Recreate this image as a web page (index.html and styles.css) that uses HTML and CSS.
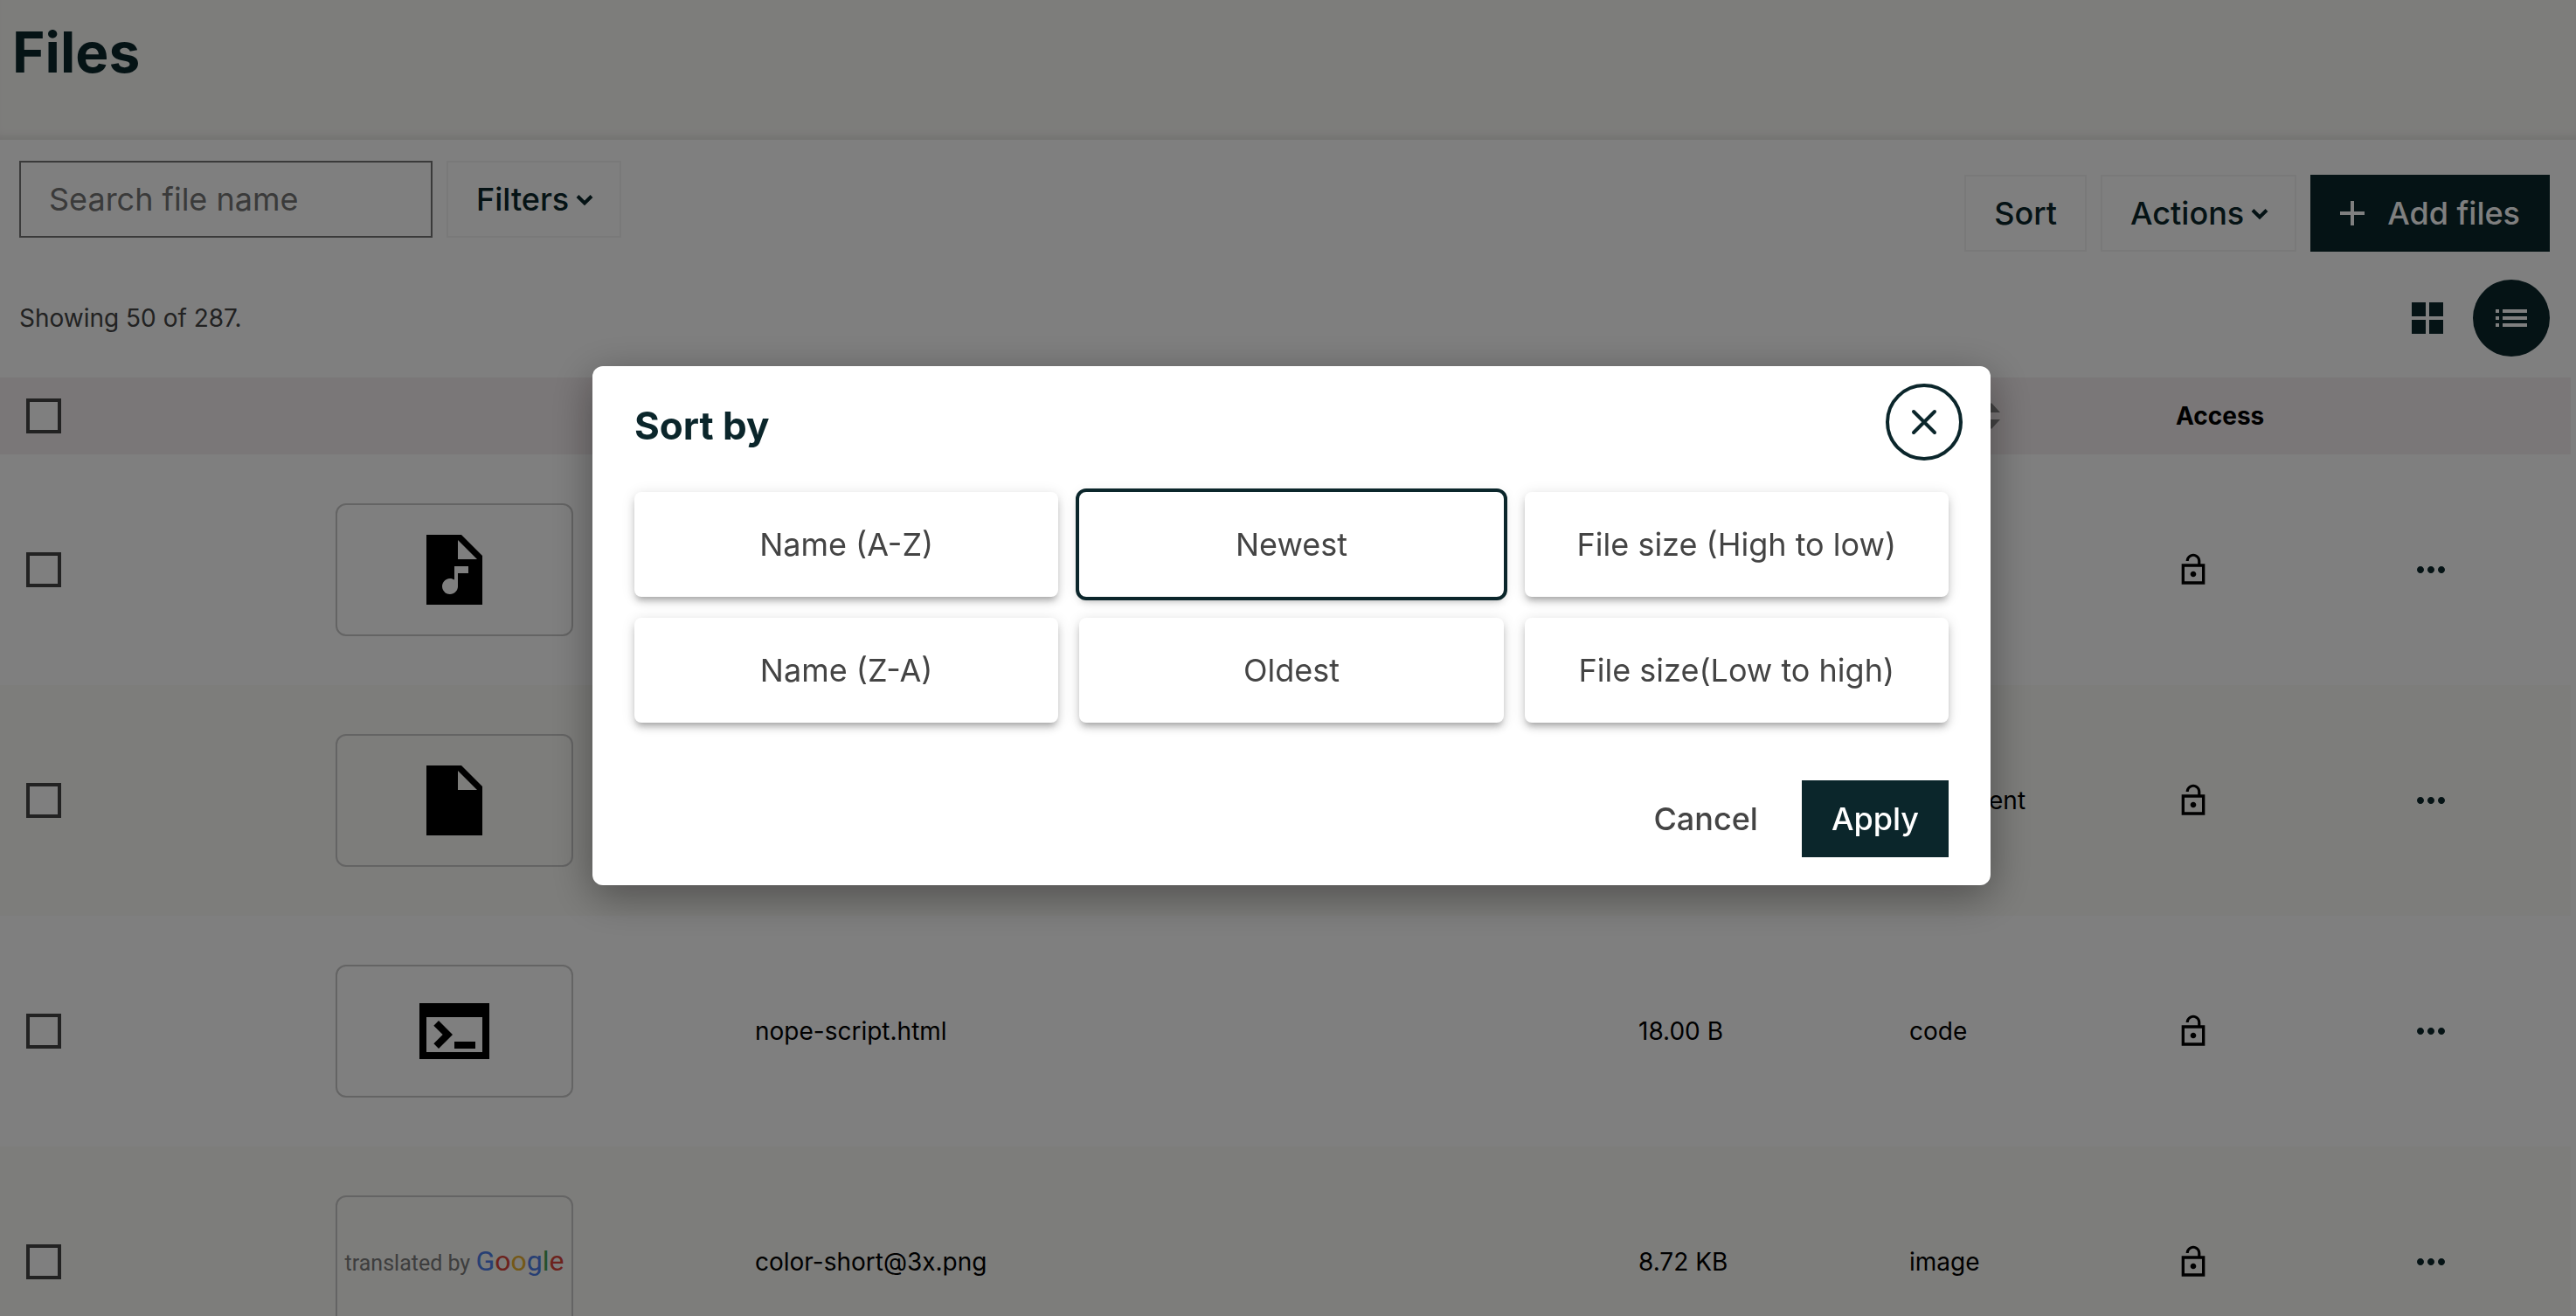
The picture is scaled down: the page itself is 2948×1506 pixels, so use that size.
FILE: index.html
```html
<!DOCTYPE html>
<html lang="en">
<head>
<meta charset="utf-8">
<title>Files</title>
<meta name="viewport" content="width=device-width, initial-scale=1">
<link rel="stylesheet" href="styles.css">
</head>
<body>
<svg class="sprite" aria-hidden="true">
  <symbol id="i-lock" viewBox="0 0 24 24"><path d="M12 17c1.1 0 2-.9 2-2s-.9-2-2-2-2 .9-2 2 .9 2 2 2zm8-9h-3V6c0-2.76-2.24-5-5-5S7 3.24 7 6h1.9c0-1.71 1.39-3.1 3.1-3.1 1.71 0 3.1 1.39 3.1 3.1v2H4v14h16V8zm-2 12H6V10h12v10z"/></symbol>
  <symbol id="i-more" viewBox="0 0 24 24"><path d="M6 10c-1.1 0-2 .9-2 2s.9 2 2 2 2-.9 2-2-.9-2-2-2zm12 0c-1.1 0-2 .9-2 2s.9 2 2 2 2-.9 2-2-.9-2-2-2zm-6 0c-1.1 0-2 .9-2 2s.9 2 2 2 2-.9 2-2-.9-2-2-2z"/></symbol>
  <symbol id="i-chevron" viewBox="0 0 20 20"><path d="M2 6.500l8 8 8-8" fill="none" stroke="currentColor" stroke-width="4"/></symbol>
  <symbol id="i-sort" viewBox="0 0 20 32"><path d="M0 12L10 1l10 11zM0 20l10 11 10-11z"/></symbol>
</svg>

<div class="page">
  <header class="page-header">
    <h1>Files</h1>
  </header>

  <main>
    <div class="toolbar">
      <div class="toolbar-search">
        <input class="search" type="text" placeholder="Search file name" aria-label="Search file name">
        <button class="btn btn-outline" type="button">Filters<svg class="chevron"><use href="#i-chevron"/></svg></button>
      </div>
      <div class="toolbar-actions">
        <button class="btn btn-outline" type="button">Sort</button>
        <button class="btn btn-outline" type="button">Actions<svg class="chevron"><use href="#i-chevron"/></svg></button>
        <button class="btn btn-dark btn-add" type="button"><svg class="plus" viewBox="0 0 24 24"><path d="M19 13h-6v6h-2v-6H5v-2h6V5h2v6h6v2z"/></svg>Add files</button>
      </div>
    </div>

    <div class="summary">
      <p>Showing 50 of 287.</p>
      <div class="views">
        <button class="round" type="button" aria-label="Grid view"><svg viewBox="0 0 24 24"><path d="M3 3v8h8V3H3zm0 10v8h8v-8H3zM13 3v8h8V3h-8zm0 10v8h8v-8h-8z"/></svg></button>
        <button class="round round-active" type="button" aria-label="List view"><svg viewBox="0 0 24 24"><path d="M3 13h2v-2H3v2zm0 4h2v-2H3v2zm0-8h2V7H3v2zm4 4h14v-2H7v2zm0 4h14v-2H7v2zM7 7v2h14V7H7z"/></svg></button>
      </div>
    </div>

    <table class="files">
      <colgroup><col class="c-check"><col class="c-thumb"><col class="c-name"><col class="c-size"><col class="c-type"><col class="c-access"><col class="c-menu"></colgroup>
      <thead>
        <tr>
          <th><input type="checkbox" aria-label="Select all files"></th>
          <th></th>
          <th></th>
          <th></th>
          <th><span class="sortable">Type<svg class="sort-arrows"><use href="#i-sort"/></svg></span></th>
          <th>Access</th>
          <th></th>
        </tr>
      </thead>
      <tbody>
        <tr>
          <td><input type="checkbox" aria-label="Select audio file"></td>
          <td><div class="thumb"><svg viewBox="0 0 24 24"><path d="M14 2H4v20h16V8l-6-6zm2 11h-3v3.750c0 1.240-1.010 2.250-2.250 2.250S8.500 17.990 8.500 16.750s1.010-2.250 2.250-2.250c.46 0 .89.14 1.250.38V11h4v2zm-3-4V3.500L18.500 9H13z"/></svg></div></td>
          <td></td><td></td><td>audio</td>
          <td><svg class="lock"><use href="#i-lock"/></svg></td>
          <td><button class="menu" type="button" aria-label="More"><svg><use href="#i-more"/></svg></button></td>
        </tr>
        <tr>
          <td><input type="checkbox" aria-label="Select document"></td>
          <td><div class="thumb"><svg viewBox="0 0 24 24"><path d="M4 2v20h16V8l-6-6H4zm9 7V3.500L18.500 9H13z"/></svg></div></td>
          <td></td><td></td><td>document</td>
          <td><svg class="lock"><use href="#i-lock"/></svg></td>
          <td><button class="menu" type="button" aria-label="More"><svg><use href="#i-more"/></svg></button></td>
        </tr>
        <tr>
          <td><input type="checkbox" aria-label="Select nope-script.html"></td>
          <td><div class="thumb"><svg viewBox="0 0 24 24"><path d="M2 4v16h20V4H2zm18 14H4V8h16v10zm-2-1h-6v-2h6v2zM7.500 17l-1.410-1.410L8.670 13l-2.590-2.590L7.500 9l4 4-4 4z"/></svg></div></td>
          <td>nope-script.html</td><td>18.00 B</td><td>code</td>
          <td><svg class="lock"><use href="#i-lock"/></svg></td>
          <td><button class="menu" type="button" aria-label="More"><svg><use href="#i-more"/></svg></button></td>
        </tr>
        <tr>
          <td><input type="checkbox" aria-label="Select color-short@3x.png"></td>
          <td><div class="thumb"><span class="attribution">translated by <span class="google"><span class="g-blue">G</span><span class="g-red">o</span><span class="g-yellow">o</span><span class="g-blue">g</span><span class="g-green">l</span><span class="g-red">e</span></span></span></div></td>
          <td>color-short@3x.png</td><td>8.72 KB</td><td>image</td>
          <td><svg class="lock"><use href="#i-lock"/></svg></td>
          <td><button class="menu" type="button" aria-label="More"><svg><use href="#i-more"/></svg></button></td>
        </tr>
      </tbody>
    </table>
  </main>
</div>

<div class="overlay">
  <section class="dialog" role="dialog" aria-modal="true" aria-labelledby="dialog-title">
    <div class="dialog-head">
      <h2 id="dialog-title">Sort by</h2>
      <button class="round round-outline" type="button" aria-label="Close"><svg viewBox="0 0 24 24"><path d="M6 6l12 12M18 6L6 18" fill="none" stroke="currentColor" stroke-width="2" stroke-linecap="round"/></svg></button>
    </div>
    <div class="options">
      <button class="option" type="button">Name (A-Z)</button>
      <button class="option option-selected" type="button" aria-pressed="true">Newest</button>
      <button class="option" type="button">File size (High to low)</button>
      <button class="option" type="button">Name (Z-A)</button>
      <button class="option" type="button">Oldest</button>
      <button class="option" type="button">File size(Low to high)</button>
    </div>
    <div class="dialog-actions">
      <button class="btn btn-text" type="button">Cancel</button>
      <button class="btn btn-dark" type="button">Apply</button>
    </div>
  </section>
</div>
</body>
</html>
```
FILE: styles.css
```css
:root {
  --ink: #0b262b;
  --grey: #444;
}

* { box-sizing: border-box; }

html, body { height: 100%; }

body {
  margin: 0;
  overflow: hidden;
  background: #fff;
  color: #000;
  font-family: Inter, "Liberation Sans", sans-serif;
  font-size: 28px;
  line-height: 40px;
}

svg { display: block; fill: currentColor; }

.sprite { display: none; }

button, input { font: inherit; color: inherit; }

.page-header {
  height: 160px;
  padding: 24px 14px;
  background: #fbfaf7;
  box-shadow: inset 0 -10px 12px -8px rgba(0, 0, 0, .12);
}

h1 {
  margin: 0;
  color: var(--ink);
  font-size: 64px;
  line-height: 72px;
  font-weight: 700;
}

.toolbar {
  display: flex;
  justify-content: space-between;
  padding: 24px 30px 0 22px;
}

.toolbar-search, .toolbar-actions { display: flex; gap: 16px; }

.toolbar-actions { padding-top: 16px; }

.search {
  width: 473px;
  height: 88px;
  padding: 0 32px;
  border: 2px solid #757575;
  border-radius: 0;
  background: #fff;
  font-size: 36px;
}

.search::placeholder { color: #757575; opacity: 1; }

.btn {
  display: flex;
  align-items: center;
  height: 88px;
  padding: 0 32px;
  border: 2px solid transparent;
  background: none;
  font-size: 36px;
  font-weight: 500;
}

.btn-outline { border-color: #f2f2f2; color: var(--ink); }

.btn-dark { border-color: var(--ink); background: var(--ink); color: #fff; }

.btn-text { color: var(--grey); }

.chevron { width: 20px; height: 20px; margin: 0 -2px 0 8px; }

.btn-add { padding-left: 22px; gap: 16px; }

.plus { width: 48px; height: 48px; }

.summary {
  display: flex;
  justify-content: space-between;
  align-items: center;
  padding: 32px 30px 24px 22px;
  color: var(--grey);
}

.summary p { margin: 0; }

.views { display: flex; gap: 8px; }

.round {
  display: grid;
  place-items: center;
  width: 88px;
  height: 88px;
  padding: 0;
  border: 0;
  border-radius: 50%;
  background: none;
  color: var(--ink);
}

.round svg { width: 48px; height: 48px; }

.round-active { background: var(--ink); color: #fff; }

.round-outline { border: 4px solid var(--ink); }

.files {
  width: calc(100% - 6px);
  table-layout: fixed;
  border-collapse: collapse;
}

.c-check { width: 354px; }
.c-thumb { width: 480px; }
.c-size { width: 310px; }
.c-type { width: 305px; }
.c-access { width: 268px; }
.c-menu { width: 214px; }

th, td { padding: 0 0 0 30px; text-align: left; vertical-align: middle; }

th { height: 88px; background: #f5eef0; font-weight: 700; }

td { height: 264px; }

tbody tr:nth-child(even) { background: #fbfaf6; }

.files input {
  appearance: none;
  display: block;
  width: 40px;
  height: 40px;
  margin: 0;
  border: 4px solid var(--grey);
  background: #fff;
}

.sortable { display: flex; align-items: center; gap: 16px; }

.sort-arrows { width: 20px; height: 32px; color: #888; }

.thumb {
  display: grid;
  place-items: center;
  width: 272px;
  height: 152px;
  border: 2px solid #c8c8c8;
  border-radius: 12px;
}

.thumb svg { width: 96px; height: 96px; }

.attribution {
  color: #7c7c7c;
  font-family: Roboto, sans-serif;
  font-size: 25px;
  white-space: nowrap;
}

.google { font-size: 32px; }
.g-blue { color: #4f7fe8; }
.g-red { color: #d8453a; }
.g-yellow { color: #e8b030; }
.g-green { color: #43a055; }

.lock { width: 40px; height: 40px; }

.menu {
  display: block;
  padding: 0;
  border: 0;
  background: none;
  color: var(--ink);
}

.menu svg { width: 48px; height: 48px; }

.overlay {
  position: fixed;
  inset: 0;
  display: flex;
  align-items: center;
  justify-content: center;
  padding: 0 0 74px 8px;
  background: rgba(0, 0, 0, .5);
}

.dialog {
  width: 1600px;
  padding: 20px 48px 32px;
  border-radius: 12px;
  background: #fff;
  box-shadow: 0 12px 48px rgba(0, 0, 0, .38);
}

.dialog-head {
  display: flex;
  justify-content: space-between;
  align-items: center;
  margin-right: -16px;
}

h2 {
  margin: 0;
  padding-top: 8px;
  color: var(--ink);
  font-size: 44px;
  line-height: 56px;
  font-weight: 700;
}

.options {
  display: grid;
  grid-template-columns: repeat(3, 1fr);
  gap: 24px;
  margin-top: 36px;
}

.option {
  height: 120px;
  border: 0;
  border-radius: 8px;
  background: #fff;
  color: var(--grey);
  font-size: 36px;
  box-shadow: 0 6px 6px -4px rgba(0, 0, 0, .2), 0 6px 8px rgba(0, 0, 0, .14), 0 2px 16px rgba(0, 0, 0, .12);
}

.option-selected { outline: 4px solid var(--ink); }

.dialog-actions {
  display: flex;
  justify-content: flex-end;
  gap: 16px;
  margin-top: 66px;
}
```
